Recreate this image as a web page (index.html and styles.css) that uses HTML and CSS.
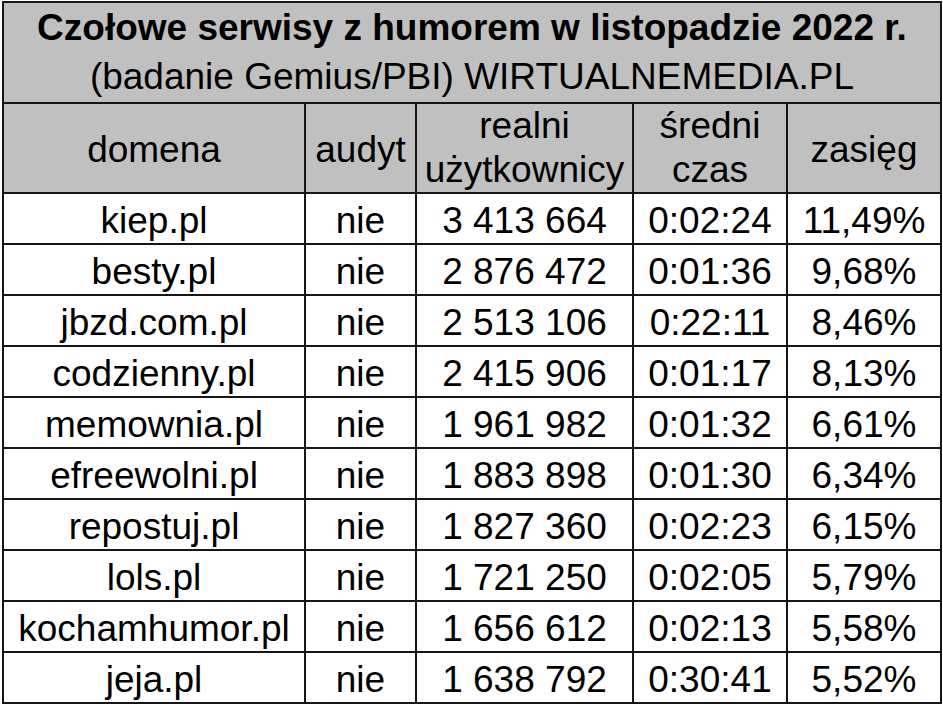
FILE: index.html
```html
<!DOCTYPE html>
<html lang="pl">
<head>
<meta charset="utf-8">
<title>Czołowe serwisy z humorem</title>
<link rel="stylesheet" href="styles.css">
</head>
<body>
<table class="stats">
  <colgroup>
    <col class="c-domain">
    <col class="c-audit">
    <col class="c-users">
    <col class="c-time">
    <col class="c-reach">
  </colgroup>
  <thead>
    <tr class="title-row">
      <th colspan="5" class="title-cell">
        <div class="title">Czołowe serwisy z humorem w listopadzie 2022 r.</div>
        <div class="subtitle">(badanie Gemius/PBI) WIRTUALNEMEDIA.PL</div>
      </th>
    </tr>
    <tr class="head-row">
      <th class="single">domena</th>
      <th class="single">audyt</th>
      <th>realni<br>użytkownicy</th>
      <th>średni<br>czas</th>
      <th class="single">zasięg</th>
    </tr>
  </thead>
  <tbody>
    <tr><td>kiep.pl</td><td>nie</td><td>3 413 664</td><td>0:02:24</td><td>11,49%</td></tr>
    <tr><td>besty.pl</td><td>nie</td><td>2 876 472</td><td>0:01:36</td><td>9,68%</td></tr>
    <tr><td>jbzd.com.pl</td><td>nie</td><td>2 513 106</td><td>0:22:11</td><td>8,46%</td></tr>
    <tr><td>codzienny.pl</td><td>nie</td><td>2 415 906</td><td>0:01:17</td><td>8,13%</td></tr>
    <tr><td>memownia.pl</td><td>nie</td><td>1 961 982</td><td>0:01:32</td><td>6,61%</td></tr>
    <tr><td>efreewolni.pl</td><td>nie</td><td>1 883 898</td><td>0:01:30</td><td>6,34%</td></tr>
    <tr><td>repostuj.pl</td><td>nie</td><td>1 827 360</td><td>0:02:23</td><td>6,15%</td></tr>
    <tr><td>lols.pl</td><td>nie</td><td>1 721 250</td><td>0:02:05</td><td>5,79%</td></tr>
    <tr><td>kochamhumor.pl</td><td>nie</td><td>1 656 612</td><td>0:02:13</td><td>5,58%</td></tr>
    <tr><td>jeja.pl</td><td>nie</td><td>1 638 792</td><td>0:30:41</td><td>5,52%</td></tr>
  </tbody>
</table>
</body>
</html>
```
FILE: styles.css
```css
html, body {
  margin: 0;
  padding: 0;
  background: #ffffff;
}

body {
  padding: 1px 0 0 2px;
  font-family: "Liberation Sans", Arial, sans-serif;
  color: #000;
}

.stats {
  border-collapse: collapse;
  table-layout: fixed;
  width: 938px;
  font-size: 37px;
}

.c-domain { width: 302px; }
.c-audit { width: 111px; }
.c-users { width: 217px; }
.c-time { width: 154px; }
.c-reach { width: 154px; }

.stats th,
.stats td {
  border: 2px solid #161616;
  padding: 0;
  text-align: center;
  white-space: nowrap;
  overflow: visible;
  box-sizing: border-box;
}

.stats th {
  font-weight: normal;
  background: #c0c0c0;
}

.title-row th {
  height: 101px;
  vertical-align: top;
  line-height: 49px;
}

.title {
  font-weight: bold;
}

.head-row th {
  height: 90px;
  vertical-align: top;
  line-height: 44px;
}

.head-row th.single {
  padding-top: 24px;
}

.stats td {
  height: 51px;
  vertical-align: top;
  line-height: 42px;
  padding-top: 6px;
}
```
